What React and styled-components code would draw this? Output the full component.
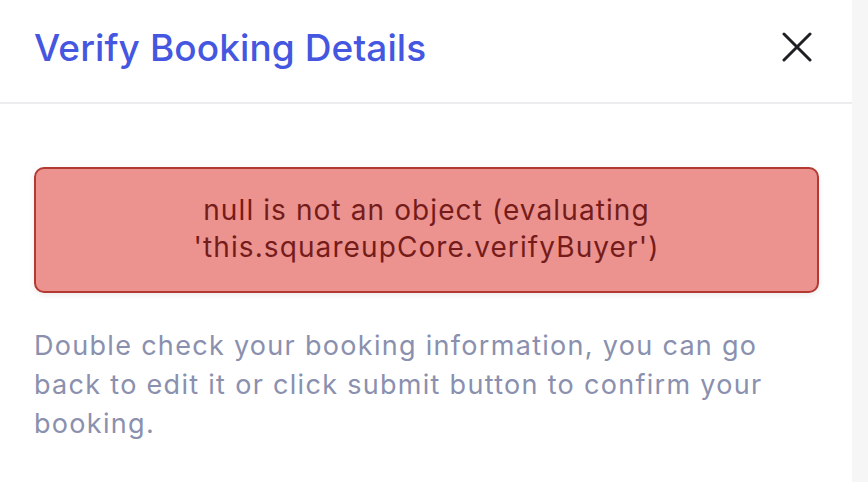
import React from 'react'
import styled, { createGlobalStyle } from 'styled-components'

const Global = createGlobalStyle`
    html, body {
        margin: 0;
        padding: 0;
        background: #f6f6f7;
    }
    body {
        font-family: Inter, "Noto Sans", sans-serif;
    }
`

const Screen = styled.div`
    display: flex;
    width: 868px;
    height: 482px;
    overflow: hidden;
`

const Sheet = styled.div`
    width: 852px;
    background: #fff;
    display: flex;
    flex-direction: column;
`

const Header = styled.div`
    height: 104px;
    box-sizing: border-box;
    border-bottom: 2px solid #ececee;
    display: flex;
    align-items: center;
    justify-content: space-between;
    padding: 0 40px 8px 34px;
`

const Title = styled.h1`
    margin: 0;
    font-size: 37px;
    font-weight: 500;
    color: #4556e0;
    letter-spacing: 0.1px;
`

const CloseButton = styled.button`
    border: none;
    background: none;
    padding: 0;
    width: 30px;
    height: 30px;
    cursor: pointer;
    display: flex;
`

const Body = styled.div`
    padding: 63px 33px 0 34px;
`

const ErrorBox = styled.div`
    height: 126px;
    box-sizing: border-box;
    border: 2px solid #b33a33;
    border-radius: 10px;
    background: #ec9390;
    box-shadow: 0 2px 6px rgba(0, 0, 0, 0.08);
    display: flex;
    align-items: center;
    justify-content: center;
    text-align: center;
    color: #751c1a;
    font-size: 28px;
    line-height: 37px;
    letter-spacing: 1.1px;
    padding: 0 20px 2px;
`

const Note = styled.p`
    margin: 33px 0 0;
    font-size: 27px;
    line-height: 39px;
    letter-spacing: 1.3px;
    color: #8a90ae;
    max-width: 785px;
`

const App = () => {
    return (
        <Screen>
            <Global />
            <Sheet>
                <Header>
                    <Title>Verify Booking Details</Title>
                    <CloseButton aria-label="Close">
                        <svg width="30" height="30" viewBox="0 0 30 30">
                            <path d="M2 2 L28 28 M28 2 L2 28" stroke="#1f1f24" strokeWidth="3" strokeLinecap="round" />
                        </svg>
                    </CloseButton>
                </Header>
                <Body>
                    <ErrorBox>
                        null is not an object (evaluating<br />
                        'this.squareupCore.verifyBuyer')
                    </ErrorBox>
                    <Note>
                        Double check your booking information, you can go back to edit it or click submit button to confirm your booking.
                    </Note>
                </Body>
            </Sheet>
        </Screen>
    )
}

export default App
